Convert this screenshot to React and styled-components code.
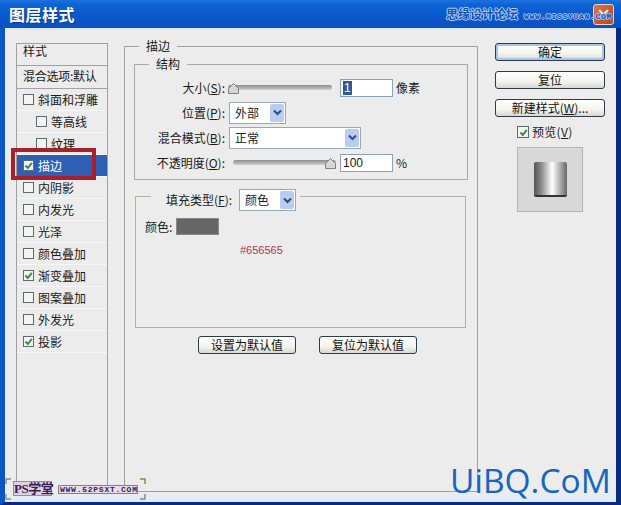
import React from 'react';
import styled, { createGlobalStyle } from 'styled-components';

const Global = createGlobalStyle`
  html, body { margin: 0; padding: 0; background: #ececec; }
  * { box-sizing: border-box; }
  #root { width: 621px; height: 505px; overflow: hidden; }
`;

const CJK = `"Noto Sans CJK SC", "Liberation Sans", sans-serif`;

const Window = styled.div`
  position: relative;
  width: 621px;
  height: 505px;
  display: flex;
  flex-direction: column;
  overflow: hidden;
  font: 12px/14px ${CJK};
  color: #1a1a1a;
  background: #0b5bcd;
`;

const TitleBar = styled.div`
  height: 28px;
  flex: none;
  display: flex;
  align-items: center;
  padding: 0 7px 0 9px;
  background: linear-gradient(180deg, #1b72dc 0%, #0d62d4 18%, #0a57cb 60%, #0b50c0 100%);
`;

const Title = styled.h1`
  margin: 0;
  font: 700 16px/20px ${CJK};
  letter-spacing: 0.5px;
  color: #fff;
  text-shadow: 1px 1px 1px #0a3a90;
`;

const TitleMark = styled.span`
  margin-left: auto;
  margin-right: 75px;
  font: 700 12px/16px ${CJK};
  color: #0f4fb8;
  text-shadow: 0 0 1px #d6e6fa, 1px 0 0 #a9c8f0, -1px 0 0 #a9c8f0, 0 1px 0 #a9c8f0, 0 -1px 0 #a9c8f0;
`;

const TitleUrl = styled.span`
  position: absolute;
  left: 524px;
  top: 12px;
  white-space: nowrap;
  font: 700 8px/10px "Liberation Mono", monospace;
  letter-spacing: 0.7px;
  color: #0f4fb8;
  text-shadow: 1px 0 0 #a9c8f0, -1px 0 0 #a9c8f0, 0 1px 0 #a9c8f0, 0 -1px 0 #a9c8f0;
`;

const CloseButton = styled.div`
  width: 21px;
  height: 21px;
  flex: none;
  border: 1px solid #e8d4c8;
  border-radius: 3px;
  background: linear-gradient(135deg, #d8794a, #c8552a 60%, #b84a28);
  display: flex;
  align-items: center;
  justify-content: center;
`;

const Frame = styled.div`
  flex: 1;
  display: flex;
  border-left: 5px solid #0b55c4;
  border-right: 5px solid #0a2a80;
  border-bottom: 3px solid #0a2a80;
  min-height: 0;
`;

const Body = styled.div`
  flex: 1;
  display: flex;
  align-items: flex-start;
  padding: 15px 11px 0 11px;
  background: linear-gradient(180deg, #dce8f6 0, #ececec 3px, #ececec 466px, #e3edf9 468px);
  min-width: 0;
`;

const Sidebar = styled.div`
  width: 92px;
  height: 448px;
  flex: none;
  margin-right: 16px;
  border: 1px solid #a0a0a0;
  border-bottom: none;
  display: flex;
  flex-direction: column;
`;

const SideHead = styled.div`
  height: 22px;
  padding: 0 0 0 6px;
  border-bottom: 1px solid #a0a0a0;
  color: #222;
`;

const SideBlend = styled.div`
  height: 23px;
  padding: 3px 0 0 6px;
  border-bottom: 1px solid #a0a0a0;
  white-space: nowrap;
  letter-spacing: -0.25px;
`;

const SideRow = styled.div`
  height: 22px;
  display: flex;
  align-items: center;
  gap: 4px;
  padding-left: ${p => (p.$sub ? 19 : 6)}px;
  border-bottom: 1px solid #f8f8f8;
  background: ${p => (p.$active ? '#2f5fb5' : 'transparent')};
  color: ${p => (p.$active ? '#fff' : '#1a1a1a')};
  white-space: nowrap;
`;

const Box = styled.span`
  width: ${p => p.$size || 11}px;
  height: ${p => p.$size || 11}px;
  flex: none;
  border: 1px solid #5c6a72;
  background: #f4f4f0;
  display: inline-flex;
  align-items: center;
  justify-content: center;
`;

const Highlight = styled.div`
  position: absolute;
  left: 11px;
  top: 148px;
  width: 85px;
  height: 32px;
  border: 4px solid #a8202c;
`;

const Main = styled.fieldset`
  width: 354px;
  height: 453px;
  flex: none;
  margin: -4px 0 0 0;
  padding: 0 9px;
  border: 1px solid #a0a0a0;
`;

const GroupLegend = styled.legend`
  margin-left: ${p => p.$indent}px;
  padding: 0 7px;
  line-height: 14px;
  color: #1a1a1a;
`;

const Structure = styled.fieldset`
  margin: 4px 0 0 0;
  padding: 4px 0 0 0;
  width: 334px;
  height: 123px;
  border: 1px solid #a8a8a8;
`;

const Row = styled.div`
  height: 25px;
  display: flex;
  align-items: center;
`;

const Label = styled.span`
  width: 90px;
  flex: none;
  text-align: right;
  white-space: nowrap;
  margin-right: 3px;
`;

const Track = styled.div`
  position: relative;
  width: ${p => p.$w}px;
  height: 12px;
  margin-left: ${p => p.$ml || 0}px;
  flex: none;
  display: flex;
  align-items: center;
`;

const TrackBar = styled.div`
  width: 100%;
  height: 5px;
  border-radius: 3px;
  background: linear-gradient(180deg, #8c8c8c, #cfcfcf);
`;

const Thumb = styled.svg`
  position: absolute;
  top: 1px;
  left: ${p => p.$left}px;
`;

const NumberBox = styled.div`
  width: 53px;
  height: 18px;
  flex: none;
  margin-left: ${p => p.$ml}px;
  border: 1px solid #8aa2b4;
  background: #fff;
  padding: 1px 2px;
  font: 12px/14px "Liberation Sans", sans-serif;
`;

const Selected = styled.span`
  display: inline-block;
  background: #2f5a9a;
  color: #fff;
  padding: 0 1px;
`;

const Unit = styled.span`
  margin-left: 3px;
`;

const Select = styled.div`
  width: ${p => p.$w}px;
  height: 22px;
  flex: none;
  margin-left: ${p => p.$ml || 0}px;
  border: 1px solid #9aa8b4;
  background: #fff;
  display: flex;
  align-items: center;
  justify-content: space-between;
  padding: 0 1px 0 5px;
`;

const SelectArrow = styled.span`
  width: 14px;
  height: 18px;
  border-radius: 2px;
  background: #b8cdf0;
  display: flex;
  align-items: center;
  justify-content: center;
`;

const Fill = styled.fieldset`
  margin: 1px 0 0 1px;
  padding: 0;
  width: 331px;
  height: 147px;
  border: 1px solid #b0b0a4;
`;

const FillLegend = styled.legend`
  margin-left: 15px;
  padding: 8px 4px 0 15px;
  display: flex;
  align-items: center;
`;

const FillLabel = styled.span`
  margin-right: 7px;
  white-space: nowrap;
`;

const ColorRow = styled.div`
  display: flex;
  align-items: center;
  height: 17px;
  margin: 7px 0 0 9px;
`;

const Swatch = styled.div`
  width: 43px;
  height: 17px;
  margin-left: 4px;
  background: #666;
  border: 1px solid #8a8a8a;
`;

const HexNote = styled.div`
  margin: 8px 0 0 104px;
  font: 11px/14px "Liberation Sans", sans-serif;
  color: #b8324a;
`;

const DefaultRow = styled.div`
  display: flex;
  gap: 23px;
  margin: 8px 0 0 64px;
`;

const Button = styled.div`
  width: ${p => p.$w}px;
  height: 18px;
  flex: none;
  border: 1px solid #2c3c48;
  border-radius: 3px;
  background: linear-gradient(180deg, #fff 0%, #f4f4ee 60%, #d8d8d0 100%);
  box-shadow: ${p => (p.$primary ? 'inset 0 0 0 2px #a8c4e8' : 'none')};
  display: flex;
  align-items: center;
  justify-content: center;
  white-space: nowrap;
  color: #111;
`;

const PreviewText = styled.span`
  letter-spacing: 0.3px;
`;

const Actions = styled.div`
  width: 110px;
  flex: none;
  margin-left: 17px;
  display: flex;
  flex-direction: column;
  align-items: center;
  gap: 10px;
`;

const PreviewLabel = styled.div`
  display: flex;
  align-items: center;
  gap: 3px;
  height: 14px;
  align-self: flex-start;
  margin: -2px 0 0 22px;
`;

const Preview = styled.div`
  width: 66px;
  height: 65px;
  margin-top: -2px;
  border: 1px solid #b4b4b4;
  background: #d8d8d8;
  display: flex;
  align-items: center;
  justify-content: center;
`;

const Cylinder = styled.div`
  width: 33px;
  height: 35px;
  border-radius: 2px;
  border-bottom: 2px solid #333;
  background: linear-gradient(90deg, #555 0%, #8a8a8a 22%, #fff 55%, #aaa 80%, #666 100%);
`;

const WatermarkLogo = styled.div`
  position: absolute;
  left: 13px;
  top: 481px;
  height: 15px;
  width: 39px;
  background: #e0d0e4;
  border: 1px solid #9a8aa0;
  font: 700 13px/13px "Liberation Serif", ${CJK};
  color: #3a2050;
  white-space: nowrap;
  letter-spacing: -0.5px;
`;

const WatermarkUrl = styled.div`
  position: absolute;
  left: 58px;
  top: 485px;
  height: 9px;
  width: 80px;
  background: #e8dcec;
  border: 1px solid #8a7a90;
  font: 700 8px/7px "Liberation Mono", monospace;
  letter-spacing: 0.75px;
  color: #3a2050;
  white-space: nowrap;
  padding-left: 1px;
`;

const Corner = styled.svg`
  position: absolute;
  left: ${p => p.$x}px;
  top: ${p => p.$y}px;
`;

const Brand = styled.div`
  position: absolute;
  left: 450px;
  top: 458px;
  font: 33.5px/44px "Open Sans", sans-serif;
  color: #1565c4;
  white-space: nowrap;
`;

const Check = () => (
  <svg width="9" height="9" viewBox="0 0 9 9">
    <path d="M1.5 4.5 L3.8 7 L7.8 1.8" fill="none" stroke="#3f8a52" strokeWidth="2" />
  </svg>
);

const Chevron = () => (
  <svg width="9" height="7" viewBox="0 0 9 7">
    <path d="M1 1.5 L4.5 5 L8 1.5" fill="none" stroke="#2c4c88" strokeWidth="2" />
  </svg>
);

const SliderThumb = ({ left }) => (
  <Thumb $left={left} width="11" height="11" viewBox="0 0 11 11">
    <path d="M5.5 0.5 L10.5 5.5 V10.5 H0.5 V5.5 Z" fill="#d6d6d6" stroke="#808080" />
  </Thumb>
);

const Mark = ({ x, y, color, d }) => (
  <Corner $x={x} $y={y} width="7" height="7" viewBox="0 0 7 7">
    <path d={d} fill="none" stroke={color} strokeWidth="2" />
    <path d={d} fill="none" stroke="#333" strokeWidth="0.5" />
  </Corner>
);

const items = [
  { t: '斜面和浮雕' },
  { t: '等高线', sub: true },
  { t: '纹理', sub: true },
  { t: '描边', on: true, active: true },
  { t: '内阴影' },
  { t: '内发光' },
  { t: '光泽' },
  { t: '颜色叠加' },
  { t: '渐变叠加', on: true },
  { t: '图案叠加' },
  { t: '外发光' },
  { t: '投影', on: true },
];

export default function App() {
  return (
    <>
      <Global />
      <Window>
        <TitleBar>
          <Title>图层样式</Title>
          <TitleMark>思缘设计论坛</TitleMark>
          <CloseButton>
            <svg width="13" height="13" viewBox="0 0 13 13">
              <path d="M2 2 L11 11 M11 2 L2 11" stroke="#f4e4d8" strokeWidth="2.4" />
            </svg>
          </CloseButton>
        </TitleBar>
        <TitleUrl>WWW.MISSYUAN.COM</TitleUrl>
        <Frame>
          <Body>
            <Sidebar>
              <SideHead>样式</SideHead>
              <SideBlend>混合选项:默认</SideBlend>
              {items.map(i => (
                <SideRow key={i.t} $sub={i.sub} $active={i.active}>
                  <Box>{i.on && <Check />}</Box>
                  {i.t}
                </SideRow>
              ))}
            </Sidebar>
            <Main>
              <GroupLegend $indent={5}>描边</GroupLegend>
              <Structure>
                <GroupLegend $indent={14}>结构</GroupLegend>
                <Row>
                  <Label>大小(<u>S</u>):</Label>
                  <Track $w={104}>
                    <TrackBar />
                    <SliderThumb left={0} />
                  </Track>
                  <NumberBox $ml={8}><Selected>1</Selected></NumberBox>
                  <Unit>像素</Unit>
                </Row>
                <Row>
                  <Label>位置(<u>P</u>):</Label>
                  <Select $w={57} $ml={1}>外部<SelectArrow><Chevron /></SelectArrow></Select>
                </Row>
                <Row>
                  <Label>混合模式(<u>B</u>):</Label>
                  <Select $w={132} $ml={1}>正常<SelectArrow><Chevron /></SelectArrow></Select>
                </Row>
                <Row>
                  <Label>不透明度(<u>O</u>):</Label>
                  <Track $w={103} $ml={5}>
                    <TrackBar />
                    <SliderThumb left={92} />
                  </Track>
                  <NumberBox $ml={4}>100</NumberBox>
                  <Unit>%</Unit>
                </Row>
              </Structure>
              <Fill>
                <FillLegend>
                  <FillLabel>填充类型(<u>F</u>):</FillLabel>
                  <Select $w={57}>颜色<SelectArrow><Chevron /></SelectArrow></Select>
                </FillLegend>
                <ColorRow>
                  颜色:
                  <Swatch />
                </ColorRow>
                <HexNote>#656565</HexNote>
              </Fill>
              <DefaultRow>
                <Button $w={98}>设置为默认值</Button>
                <Button $w={98}>复位为默认值</Button>
              </DefaultRow>
            </Main>
            <Actions>
              <Button $w={110} $primary>确定</Button>
              <Button $w={110}>复位</Button>
              <Button $w={110}>新建样式(<u>W</u>)...</Button>
              <PreviewLabel>
                <Box $size={12}><Check /></Box>
                <PreviewText>预览(<u>V</u>)</PreviewText>
              </PreviewLabel>
              <Preview><Cylinder /></Preview>
            </Actions>
          </Body>
        </Frame>
        <Highlight />
        <WatermarkLogo>PS学堂</WatermarkLogo>
        <WatermarkUrl>WWW.52PSXT.COM</WatermarkUrl>
        <Mark x={5} y={478} color="#c8c8b8" d="M1 6 V1 H6" />
        <Mark x={5} y={493} color="#c8d8a0" d="M1 1 V6 H6" />
        <Mark x={139} y={478} color="#c8c880" d="M1 1 H6 V6" />
        <Mark x={139} y={493} color="#c8c8c8" d="M6 1 V6 H1" />
        <Brand>UiBQ.CoM</Brand>
      </Window>
    </>
  );
}
